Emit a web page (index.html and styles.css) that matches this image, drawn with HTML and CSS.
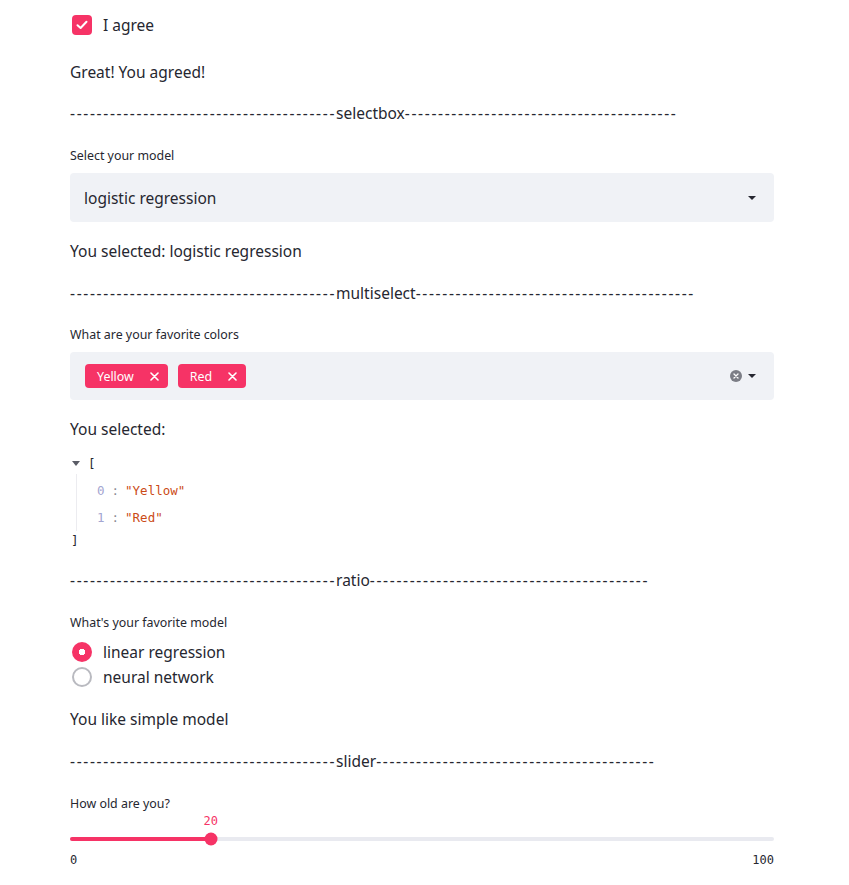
FILE: index.html
```html
<!DOCTYPE html>
<html lang="en">
<head>
<meta charset="utf-8">
<title>Streamlit widgets</title>
<link rel="stylesheet" href="styles.css">
</head>
<body>
<main class="page">
  <div class="checkbox-row">
    <span class="checkbox">
      <svg width="12" height="10" viewBox="0 0 12 10"><path d="M1.5 5.2 L4.6 8 L10.5 1.8" fill="none" stroke="#fff" stroke-width="2" stroke-linecap="round" stroke-linejoin="round"/></svg>
    </span>
    <span class="text">I agree</span>
  </div>

  <p class="text mt-23">Great! You agreed!</p>

  <p class="dashes mt-17"><span class="d">----------------------------------------</span>selectbox<span class="d">-----------------------------------------</span></p>

  <p class="label mt-23">Select your model</p>
  <div class="select mt-9">
    <span class="select-value">logistic regression</span>
    <span class="caret"></span>
  </div>

  <p class="text mt-17">You selected: logistic regression</p>

  <p class="dashes mt-18"><span class="d">----------------------------------------</span>multiselect<span class="d">------------------------------------------</span></p>

  <p class="label mt-22">What are your favorite colors</p>
  <div class="select multi mt-9">
    <div class="tags">
      <span class="tag">Yellow<svg class="tag-x" width="9" height="9" viewBox="0 0 9 9"><path d="M1 1 L8 8 M8 1 L1 8" stroke="#fff" stroke-width="1.6" stroke-linecap="round"/></svg></span>
      <span class="tag">Red<svg class="tag-x" width="9" height="9" viewBox="0 0 9 9"><path d="M1 1 L8 8 M8 1 L1 8" stroke="#fff" stroke-width="1.6" stroke-linecap="round"/></svg></span>
    </div>
    <div class="controls">
      <span class="clear">
        <svg width="6" height="6" viewBox="0 0 6 6"><path d="M1 1 L5 5 M5 1 L1 5" stroke="#fff" stroke-width="1.3" stroke-linecap="round"/></svg>
      </span>
      <span class="caret"></span>
    </div>
  </div>

  <p class="text mt-17">You selected:</p>

  <div class="json mt-11">
    <div class="json-open"><span class="tri"></span><span class="br">[</span></div>
    <div class="json-body">
      <div class="json-line"><span class="idx">0</span><span class="colon">:</span><span class="str">"Yellow"</span></div>
      <div class="json-line"><span class="idx">1</span><span class="colon">:</span><span class="str">"Red"</span></div>
    </div>
    <div class="json-close"><span class="br">]</span></div>
  </div>

  <p class="dashes mt-18"><span class="d">----------------------------------------</span>ratio<span class="d">------------------------------------------</span></p>

  <p class="label mt-23">What's your favorite model</p>
  <div class="radios mt-9">
    <div class="radio-row"><span class="radio on"></span><span class="text">linear regression</span></div>
    <div class="radio-row"><span class="radio"></span><span class="text">neural network</span></div>
  </div>

  <p class="text mt-18">You like simple model</p>

  <p class="dashes mt-18"><span class="d">----------------------------------------</span>slider<span class="d">------------------------------------------</span></p>

  <p class="label mt-23">How old are you?</p>
  <div class="slider">
    <div class="slider-value-row"><span class="slider-value" style="left: 20%">20</span></div>
    <div class="track">
      <div class="fill" style="width: 20%"></div>
      <span class="thumb" style="left: 20%"></span>
    </div>
    <div class="ticks"><span>0</span><span>100</span></div>
  </div>
</main>
</body>
</html>
```

FILE: styles.css
```css
* { box-sizing: border-box; }
html, body { margin: 0; padding: 0; background: #ffffff; }
body {
  font-family: "Noto Sans", "Open Sans", sans-serif;
  color: #262730;
}
.page {
  width: 704px;
  margin-left: 70px;
  padding-top: 13px;
  display: flex;
  flex-direction: column;
}
p { margin: 0; }
.text {
  font-size: 15.5px;
  line-height: 24px;
  height: 24px;
  white-space: nowrap;
}
.label {
  font-size: 12.4px;
  line-height: 16px;
  height: 16px;
  color: #262730;
}
.dashes {
  font-size: 15.5px;
  line-height: 24px;
  height: 24px;
  white-space: nowrap;
  color: #262730;
}
.dashes .d { letter-spacing: 1.66px; }
.mt-9 { margin-top: 9px; }
.mt-10 { margin-top: 10px; }
.mt-11 { margin-top: 11px; }
.mt-17 { margin-top: 17px; }
.mt-18 { margin-top: 18px; }
.mt-22 { margin-top: 22px; }
.mt-23 { margin-top: 23px; }

.checkbox-row {
  display: flex;
  align-items: center;
  height: 24px;
}
.checkbox {
  width: 20px;
  height: 20px;
  margin-left: 2px;
  margin-right: 11px;
  border-radius: 4px;
  background: #f63366;
  display: flex;
  align-items: center;
  justify-content: center;
}

.select {
  height: 49px;
  background: #f0f2f6;
  border-radius: 4px;
  display: flex;
  align-items: center;
  justify-content: space-between;
  padding: 0 18px 0 14px;
}
.select-value { font-size: 15.5px; }
.caret {
  width: 0;
  height: 0;
  border-left: 4px solid transparent;
  border-right: 4px solid transparent;
  border-top: 4px solid #262730;
}
.multi { height: 48px; padding-left: 15px; }
.tags { display: flex; gap: 10px; }
.tag {
  height: 24px;
  background: #f63366;
  color: #fff;
  border-radius: 4px;
  font-size: 12.4px;
  display: flex;
  align-items: center;
  padding: 0 9px 0 12px;
}
.tag-x { margin-left: 16px; }
.controls { display: flex; align-items: center; gap: 6px; }
.clear {
  width: 12px;
  height: 12px;
  border-radius: 50%;
  background: #7c7e86;
  display: flex;
  align-items: center;
  justify-content: center;
}

.json {
  font-family: "DejaVu Sans Mono", monospace;
  font-size: 12.5px;
  color: #262730;
}
.json-open { height: 22px; display: flex; align-items: center; }
.tri {
  width: 0; height: 0;
  margin-left: 2px;
  margin-right: 8px;
  border-left: 4px solid transparent;
  border-right: 4px solid transparent;
  border-top: 5px solid #5a5c66;
}
.json-body {
  margin-left: 6px;
  border-left: 1px solid #ececf0;
  padding-left: 20px;
  padding-top: 3px;
}
.json-line { height: 27px; display: flex; align-items: center; }
.idx { color: #a3a5d1; }
.colon { color: #8b8d96; margin: 0 6px 0 7px; }
.str { color: #cb4b16; }
.json-close { height: 19px; display: flex; align-items: center; padding-left: 1px; }

.radios { display: flex; flex-direction: column; gap: 1px; }
.radio-row { display: flex; align-items: center; height: 24px; }
.radio {
  width: 20px;
  height: 20px;
  margin-left: 2px;
  margin-right: 11px;
  border-radius: 50%;
  border: 2px solid #b9bac0;
  background: #fff;
}
.radio.on {
  border: none;
  background: radial-gradient(circle, #fff 0 3px, #f63366 3.5px);
}

.slider { display: flex; flex-direction: column; }
.slider-value-row { position: relative; height: 18px; }
.slider-value {
  position: absolute;
  top: 0;
  transform: translateX(-50%);
  font-family: "DejaVu Sans Mono", monospace;
  font-size: 12px;
  line-height: 18px;
  color: #f63366;
}
.track {
  position: relative;
  height: 4px;
  margin-top: 7px;
  background: #e9eaf0;
  border-radius: 2px;
}
.fill { height: 4px; background: #f63366; border-radius: 2px; }
.thumb {
  position: absolute;
  top: 50%;
  width: 13px;
  height: 13px;
  border-radius: 50%;
  background: #f63366;
  transform: translate(-50%, -50%);
}
.ticks {
  display: flex;
  justify-content: space-between;
  font-family: "DejaVu Sans Mono", monospace;
  font-size: 12px;
  line-height: 18px;
  margin-top: 10px;
  color: #262730;
}
```
